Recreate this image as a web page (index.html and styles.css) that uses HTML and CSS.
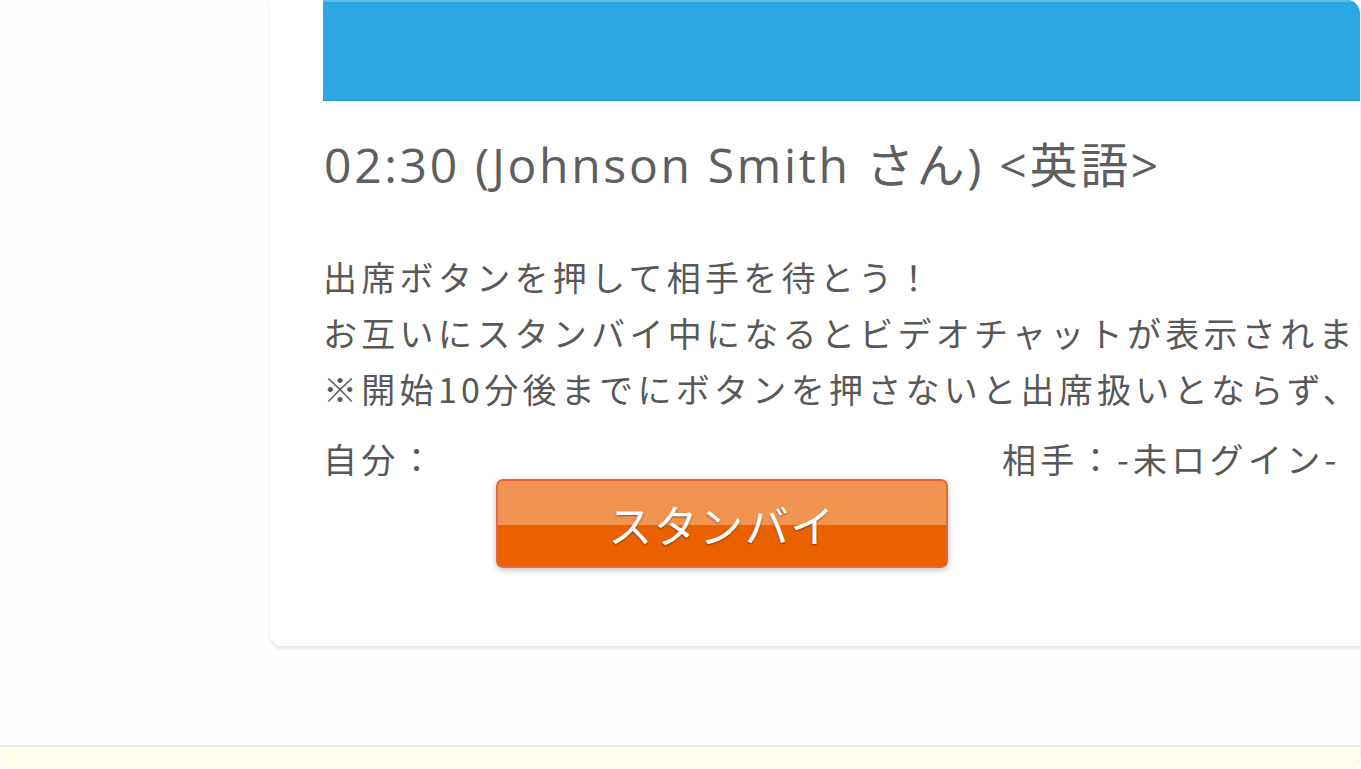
FILE: index.html
```html
<!DOCTYPE html>
<html lang="ja">
<head>
<meta charset="utf-8">
<title>スタンバイ</title>
<link rel="stylesheet" href="styles.css">
</head>
<body>
<div class="frame">
  <main class="stage">
    <section class="card">
      <div class="card-head"></div>
      <h1 class="title">02:30 (Johnson Smith さん) &lt;英語&gt;</h1>
      <p class="notes">出席ボタンを押して相手を待とう！<br>お互いにスタンバイ中になるとビデオチャットが表示されます。<br>※開始10分後までにボタンを押さないと出席扱いとならず、欠席となります。</p>
      <div class="status-row">
        <span class="status-self">自分：</span>
        <span class="status-peer">相手：-未ログイン-</span>
      </div>
      <button class="standby" type="button">スタンバイ</button>
    </section>
  </main>
  <footer class="strip"></footer>
</div>
</body>
</html>
```

FILE: styles.css
```css
html, body {
  margin: 0;
  padding: 0;
  background: #ffffff;
}

.frame {
  width: 1361px;
  height: 769px;
  box-sizing: border-box;
  border-radius: 14px;
  overflow: hidden;
  background: #fefefe;
  display: flex;
  flex-direction: column;
  border-right: 1px solid #f0f0f0;
  font-family: "Noto Sans CJK JP", "Noto Sans", sans-serif;
  color: #555555;
}

.stage {
  flex: 1;
  display: flex;
  flex-direction: column;
}

.card {
  margin-left: 270px;
  width: 1200px;
  height: 646px;
  box-sizing: border-box;
  padding-left: 53px;
  background: #ffffff;
  border-radius: 0 0 12px 12px;
  box-shadow: 0 3px 3px rgba(0, 0, 0, 0.09);
  overflow: hidden;
  white-space: nowrap;
}

.card-head {
  height: 101px;
  background: #2ca7e1;
  border-top: 2px solid #5dbdea;
  border-bottom: 1px solid #1f9bd6;
  box-sizing: border-box;
}

.title {
  margin: 32px 0 0 1px;
  font-family: "Open Sans", "Noto Sans CJK JP", sans-serif;
  font-size: 48px;
  font-weight: 400;
  line-height: 64px;
  letter-spacing: 2.7px;
  color: #5e5e5e;
}

.notes {
  margin: 52px 0 0 0;
  font-size: 34px;
  line-height: 56px;
  letter-spacing: 4.3px;
  color: #585858;
}

.status-row {
  margin-top: 14px;
  display: flex;
  font-size: 34px;
  line-height: 56px;
  letter-spacing: 4.3px;
  color: #585858;
}

.status-self {
  width: 679px;
}

.standby {
  display: block;
  margin: -8px 0 0 173px;
  width: 452px;
  height: 89px;
  border: 2px solid #e8673a;
  border-radius: 7px;
  background: linear-gradient(to bottom, #f19452 0, #f19452 52%, #eb6100 52%, #eb6100 100%);
  box-shadow: 0 2px 6px rgba(0, 0, 0, 0.25);
  color: #ffffff;
  font-family: "Noto Sans CJK JP", "Noto Sans", sans-serif;
  font-size: 44px;
  font-weight: 400;
  letter-spacing: 1.5px;
  text-shadow: 0 1px 2px rgba(0, 0, 0, 0.45);
  padding: 0;
}

.strip {
  height: 22px;
  flex: none;
  background: #fffeea;
  border-top: 2px solid #ececec;
}
```
